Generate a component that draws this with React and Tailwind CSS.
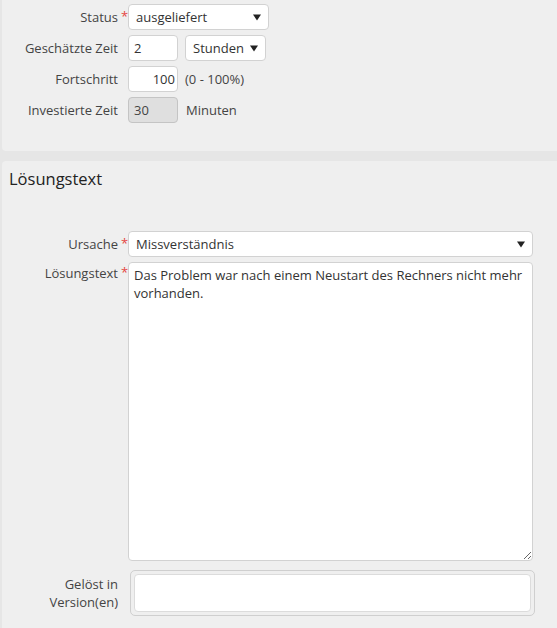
import React from 'react';

const Caret = () => (
  <svg width="8" height="7" viewBox="0 0 8 7" className="shrink-0">
    <path d="M0 0.5 L8 0.5 L4 6.5 Z" fill="#222" />
  </svg>
);

const Label = ({ children, required, className = "" }) => (
  <div className={`w-[116px] shrink-0 text-right text-[#444] ${className}`}>
    <span className="relative">
      {children}
      {required && (
        <span className="absolute left-full ml-[3px] top-[-1px] text-[#e5463f]">*</span>
      )}
    </span>
  </div>
);

const Select = ({ value, className = "" }) => (
  <div
    className={`h-[26px] flex items-center justify-between bg-white border border-[#d2d2d2] rounded-[4px] pl-[7px] pr-[7px] text-[#333] ${className}`}
  >
    <span>{value}</span>
    <Caret />
  </div>
);

const Row = ({ children, className = "" }) => (
  <div className={`flex items-center ${className}`}>{children}</div>
);

const App = () => {
  return (
    <div
      className="min-h-screen bg-[#e6e6e6] pl-[2px] text-[13px] leading-[18px]"
      style={{ fontFamily: '"Open Sans", "Liberation Sans", sans-serif' }}
    >
      {/* Upper panel */}
      <div className="bg-[#efefef] rounded-bl-[4px] pt-[4px] pb-[28px] flex flex-col gap-[5px]">
        <Row>
          <Label required>Status</Label>
          <Select value="ausgeliefert" className="ml-[10px] w-[141px]" />
        </Row>
        <Row>
          <Label>Geschätzte Zeit</Label>
          <div className="ml-[10px] w-[50px] h-[26px] bg-white border border-[#d2d2d2] rounded-[4px] px-[5px] flex items-center text-[#333]">
            2
          </div>
          <Select value="Stunden" className="ml-[7px] w-[81px]" />
        </Row>
        <Row>
          <Label>Fortschritt</Label>
          <div className="ml-[10px] w-[50px] h-[26px] bg-white border border-[#d2d2d2] rounded-[4px] px-[2px] flex items-center justify-end text-[#333]">
            100
          </div>
          <span className="ml-[7px] text-[#444]">(0 - 100%)</span>
        </Row>
        <Row>
          <Label>Investierte Zeit</Label>
          <div className="ml-[10px] w-[50px] h-[26px] bg-[#dfdfdf] border border-[#c4c4c4] rounded-[4px] px-[5px] flex items-center text-[#444]">
            30
          </div>
          <span className="ml-[8px] text-[#444]">Minuten</span>
        </Row>
      </div>

      {/* Lower panel */}
      <div className="mt-[10px] bg-[#efefef] rounded-tl-[4px] pt-[8px] pb-[12px] min-h-[467px]">
        <h2 className="pl-[7px] text-[16.5px] leading-[20px] font-medium text-[#222]">Lösungstext</h2>

        <div className="mt-[42px] pr-[22px] flex flex-col">
          <Row>
            <Label required>Ursache</Label>
            <Select value="Missverständnis" className="ml-[10px] flex-1 mr-[2px]" />
          </Row>
          <div className="flex items-start mt-[5px]">
            <Label required className="pt-[2px]">Lösungstext</Label>
            <textarea
              className="ml-[10px] flex-1 mr-[2px] h-[299px] bg-white border border-[#d2d2d2] rounded-[4px] px-[5px] py-[3px] text-[#333] outline-none resize-y"
              defaultValue="Das Problem war nach einem Neustart des Rechners nicht mehr vorhanden."
            />
          </div>
          <Row className="mt-[9px]">
            <Label>
              Gelöst in
              <br />
              Version(en)
            </Label>
            <div className="ml-[12px] flex-1 h-[46px] border border-[#cfcfcf] rounded-[5px] p-[3px]">
              <div className="h-full bg-white border border-[#dcdcdc] rounded-[4px]" />
            </div>
          </Row>
        </div>
      </div>
    </div>
  );
};

export default App;
